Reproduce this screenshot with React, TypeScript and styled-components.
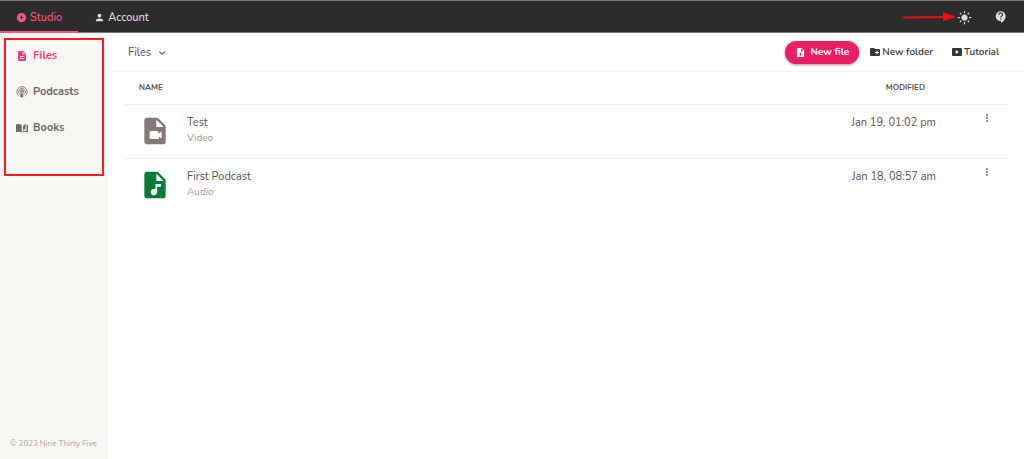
import React from 'react';
import styled, { createGlobalStyle } from 'styled-components';
import { MdPerson, MdPlayCircleFilled, MdKeyboardArrowDown, MdMoreVert, MdLightMode, MdContactSupport } from 'react-icons/md';

const GlobalStyle = createGlobalStyle`
  *, *::before, *::after { box-sizing: border-box; }
  body {
    margin: 0;
    background: #fff;
    color: #5f5053;
    font-family: Nunito, "Open Sans", sans-serif;
    font-size: 11px;
    line-height: 16px;
  }
  button { font: inherit; color: inherit; background: none; border: 0; padding: 0; cursor: pointer; }
  a { color: inherit; text-decoration: none; }
  svg { display: block; flex: none; }
`;

const Page = styled.div`
  display: flex;
  flex-direction: column;
  min-height: 100vh;
`;

const TopBar = styled.header`
  display: flex;
  align-items: stretch;
  height: 33px;
  background: #2d2c2d;
  border-top: 1px solid #777;
  border-bottom: 1px solid #777;
`;

const Tab = styled.a<{ $active?: boolean }>`
  display: flex;
  align-items: center;
  gap: 3px;
  padding: 3px 16px 0;
  margin-bottom: -1px;
  font-weight: 500;
  color: ${({ $active }) => ($active ? '#f4568c' : '#dedcdc')};
  border-bottom: 2px solid ${({ $active }) => ($active ? '#f4568c' : 'transparent')};
`;

const TopActions = styled.div`
  display: flex;
  align-items: center;
  gap: 22px;
  margin-left: auto;
  padding: 1px 16px 0 0;
  color: #dedcdc;
`;

const SunWrap = styled.div`
  position: relative;
  display: flex;
`;

const Arrow = styled.svg`
  position: absolute;
  right: 15px;
  top: 1px;
`;

const IconButton = styled.button`
  display: flex;
`;

const Body = styled.div`
  display: flex;
  flex: 1;
`;

const Sidebar = styled.aside`
  display: flex;
  flex-direction: column;
  justify-content: space-between;
  width: 108px;
  padding: 5px 4px 7px;
  background: #f8f7f3;
`;

const NavBox = styled.nav`
  display: flex;
  flex-direction: column;
  gap: 20px;
  padding: 8px 10px 38px;
  border: 2px solid #fb1e1e;
`;

const NavLink = styled.a<{ $active?: boolean }>`
  display: flex;
  align-items: center;
  gap: 5px;
  font-weight: 700;
  color: ${({ $active }) => ($active ? '#ef3d7b' : '#75696b')};
`;

const Copyright = styled.small`
  padding-left: 6px;
  font-size: 8px;
  line-height: 16px;
  color: #aaa6a5;
  white-space: nowrap;
`;

const Main = styled.main`
  flex: 1;
  min-width: 0;
`;

const Toolbar = styled.div`
  display: flex;
  align-items: center;
  gap: 18px;
  height: 39px;
  padding: 0 25px 0 20px;
  border-bottom: 1px solid #f3f2ef;
`;

const Crumb = styled.button`
  display: flex;
  align-items: center;
  gap: 5px;
  margin-right: auto;
  padding-top: 1px;
`;

const ToolButton = styled.button`
  display: flex;
  align-items: center;
  gap: 1px;
  font-size: 10px;
  font-weight: 600;
  color: #3c3033;
`;

const PrimaryButton = styled(ToolButton)`
  gap: 5px;
  height: 23px;
  padding: 0 10px;
  margin-right: -8px;
  border-radius: 12px;
  font-weight: 700;
  color: #fff;
  background: #e91e63;
  box-shadow: 0 1px 3px #0006;
`;

const FileTable = styled.table`
  width: calc(100% - 32px);
  margin: 0 16px;
  border-collapse: collapse;
  table-layout: fixed;
`;

const HeadCell = styled.th<{ $end?: boolean }>`
  width: ${({ $end }) => ($end ? '130px' : 'auto')};
  height: 32px;
  padding: 1px ${({ $end }) => ($end ? '11px' : '0')} 0 15px;
  text-align: ${({ $end }) => ($end ? 'right' : 'left')};
  font-size: 8px;
  font-weight: 700;
`;

const MenuHead = styled.th`
  width: 72px;
`;

const Row = styled.tr`
  height: 54px;
  border-top: 1px solid #efeeee;
`;

const Cell = styled.td<{ $end?: boolean }>`
  padding: 10px 0 0;
  vertical-align: top;
  text-align: ${({ $end }) => ($end ? 'right' : 'left')};
`;

const MenuCell = styled(Cell)`
  padding: 7px 0 0 45px;
  color: #807477;
`;

const FileInfo = styled.div`
  display: flex;
  gap: 16px;
  padding-left: 15px;
`;

const Kind = styled.div`
  font-size: 10px;
  line-height: 14px;
  color: #a19a9b;
`;

const PAGE = 'M13,9H18.5L13,3.5V9M6,2H14L20,8V20A2,2 0 0,1 18,22H6C4.89,22 4,21.1 4,20V4C4,2.89 4.89,2 6,2Z';
const MARKS = {
  text: 'M16,18V16H8V18H16M16,14V12H8V14H16Z',
  video: 'M8.500 12H14A.5.5 0 0 1 14.500 12.500V14L17 12.300V17.700L15 16.300V17.500A.5.5 0 0 1 14.500 18H8.500A.5.5 0 0 1 8 17.500V12.500A.5.5 0 0 1 8.500 12Z',
  music: 'M12.300 11.200H16.400V13.400H13.600V17.400A2.400 2.400 0 1 1 12.300 15.200Z',
  plus: 'M11,12V14.500H8.500V16.500H11V19H13V16.500H15.500V14.500H13V12Z',
};

function FileIcon({ mark, size, color = 'currentColor' }: { mark: keyof typeof MARKS; size: number; color?: string }) {
  return (
    <svg width={size} height={size} viewBox="0 0 24 24" fill={color} fillRule="evenodd" aria-hidden="true">
      <path d={PAGE + MARKS[mark]} />
    </svg>
  );
}

function PodcastIcon() {
  return (
    <svg width="12" height="12" viewBox="0 0 24 24" fill="none" stroke="currentColor" strokeWidth="1.600" strokeLinecap="round" aria-hidden="true">
      <path d="M5.500 20A10.500 10.500 0 1 1 18.500 20M6.500 16A7 7 0 1 1 17.500 16M8.800 13A3.800 3.800 0 1 1 15.200 13" />
      <path d="M10 15.500H14L13.500 22H10.500Z" fill="currentColor" />
      <circle cx="12" cy="11" r="1.500" fill="currentColor" />
    </svg>
  );
}

function BookIcon() {
  return (
    <svg width="12" height="12" viewBox="0 0 24 24" fill="currentColor" aria-hidden="true">
      <path d="M0 5C3 3.500 8 3.500 11.500 5.500V21C8 19 3 19 0 20.500Z" />
      <path d="M14 8L19 3V13L14 17.500Z" />
      <path d="M21 5L24 6V20.500C20 19 16 19 12.500 21V19C16 17.200 19 17.200 22 18H21Z" />
    </svg>
  );
}

function FolderPlusIcon() {
  return (
    <svg width="12" height="12" viewBox="0 0 24 24" fill="currentColor" fillRule="evenodd" aria-hidden="true">
      <path d="M10 4L12 6H20A2 2 0 0 1 22 8V18A2 2 0 0 1 20 20H4A2 2 0 0 1 2 18V6A2 2 0 0 1 4 4ZM15 9V12H12V14H15V17H17V14H20V12H17V9Z" />
    </svg>
  );
}

function TutorialIcon() {
  return (
    <svg width="12" height="12" viewBox="0 0 24 24" fill="currentColor" fillRule="evenodd" aria-hidden="true">
      <path d="M4 4H20A2 2 0 0 1 22 6V18A2 2 0 0 1 20 20H4A2 2 0 0 1 2 18V6A2 2 0 0 1 4 4ZM9.500 8V16L15.500 12Z" />
    </svg>
  );
}

const files = [
  { name: 'Test', kind: 'Video', mark: 'video' as const, color: '#857977', modified: 'Jan 19, 01:02 pm' },
  { name: 'First Podcast', kind: 'Audio', mark: 'music' as const, color: '#0b7a38', modified: 'Jan 18, 08:57 am' },
];

export default function App() {
  return (
    <Page>
      <GlobalStyle />
      <TopBar>
        <Tab href="#studio" $active><MdPlayCircleFilled size={11} />Studio</Tab>
        <Tab href="#account"><MdPerson size={11} />Account</Tab>
        <TopActions>
          <SunWrap>
            <Arrow width="54" height="12" viewBox="0 0 54 12" aria-hidden="true">
              <path d="M1 6.500L42 6" stroke="#e80f0f" strokeWidth="2" strokeLinecap="round" />
              <path d="M40 1L53 6L40 10Z" fill="#ff0909" />
            </Arrow>
            <IconButton aria-label="Theme"><MdLightMode size={15} /></IconButton>
          </SunWrap>
          <IconButton aria-label="Help"><MdContactSupport size={14} /></IconButton>
        </TopActions>
      </TopBar>
      <Body>
        <Sidebar>
          <NavBox>
            <NavLink href="#files" $active><FileIcon mark="text" size={12} />Files</NavLink>
            <NavLink href="#podcasts"><PodcastIcon />Podcasts</NavLink>
            <NavLink href="#books"><BookIcon />Books</NavLink>
          </NavBox>
          <Copyright>© 2023 Nine Thirty Five</Copyright>
        </Sidebar>
        <Main>
          <Toolbar>
            <Crumb>Files <MdKeyboardArrowDown size={12} /></Crumb>
            <PrimaryButton><FileIcon mark="plus" size={11} />New file</PrimaryButton>
            <ToolButton><FolderPlusIcon />New folder</ToolButton>
            <ToolButton><TutorialIcon />Tutorial</ToolButton>
          </Toolbar>
          <FileTable>
            <thead>
              <tr>
                <HeadCell>NAME</HeadCell>
                <HeadCell $end>MODIFIED</HeadCell>
                <MenuHead aria-label="Actions" />
              </tr>
            </thead>
            <tbody>
              {files.map((f) => (
                <Row key={f.name}>
                  <Cell>
                    <FileInfo>
                      <FileIcon mark={f.mark} size={32} color={f.color} />
                      <div>
                        <div>{f.name}</div>
                        <Kind>{f.kind}</Kind>
                      </div>
                    </FileInfo>
                  </Cell>
                  <Cell $end>{f.modified}</Cell>
                  <MenuCell><IconButton aria-label={`Options for ${f.name}`}><MdMoreVert size={12} /></IconButton></MenuCell>
                </Row>
              ))}
            </tbody>
          </FileTable>
        </Main>
      </Body>
    </Page>
  );
}
